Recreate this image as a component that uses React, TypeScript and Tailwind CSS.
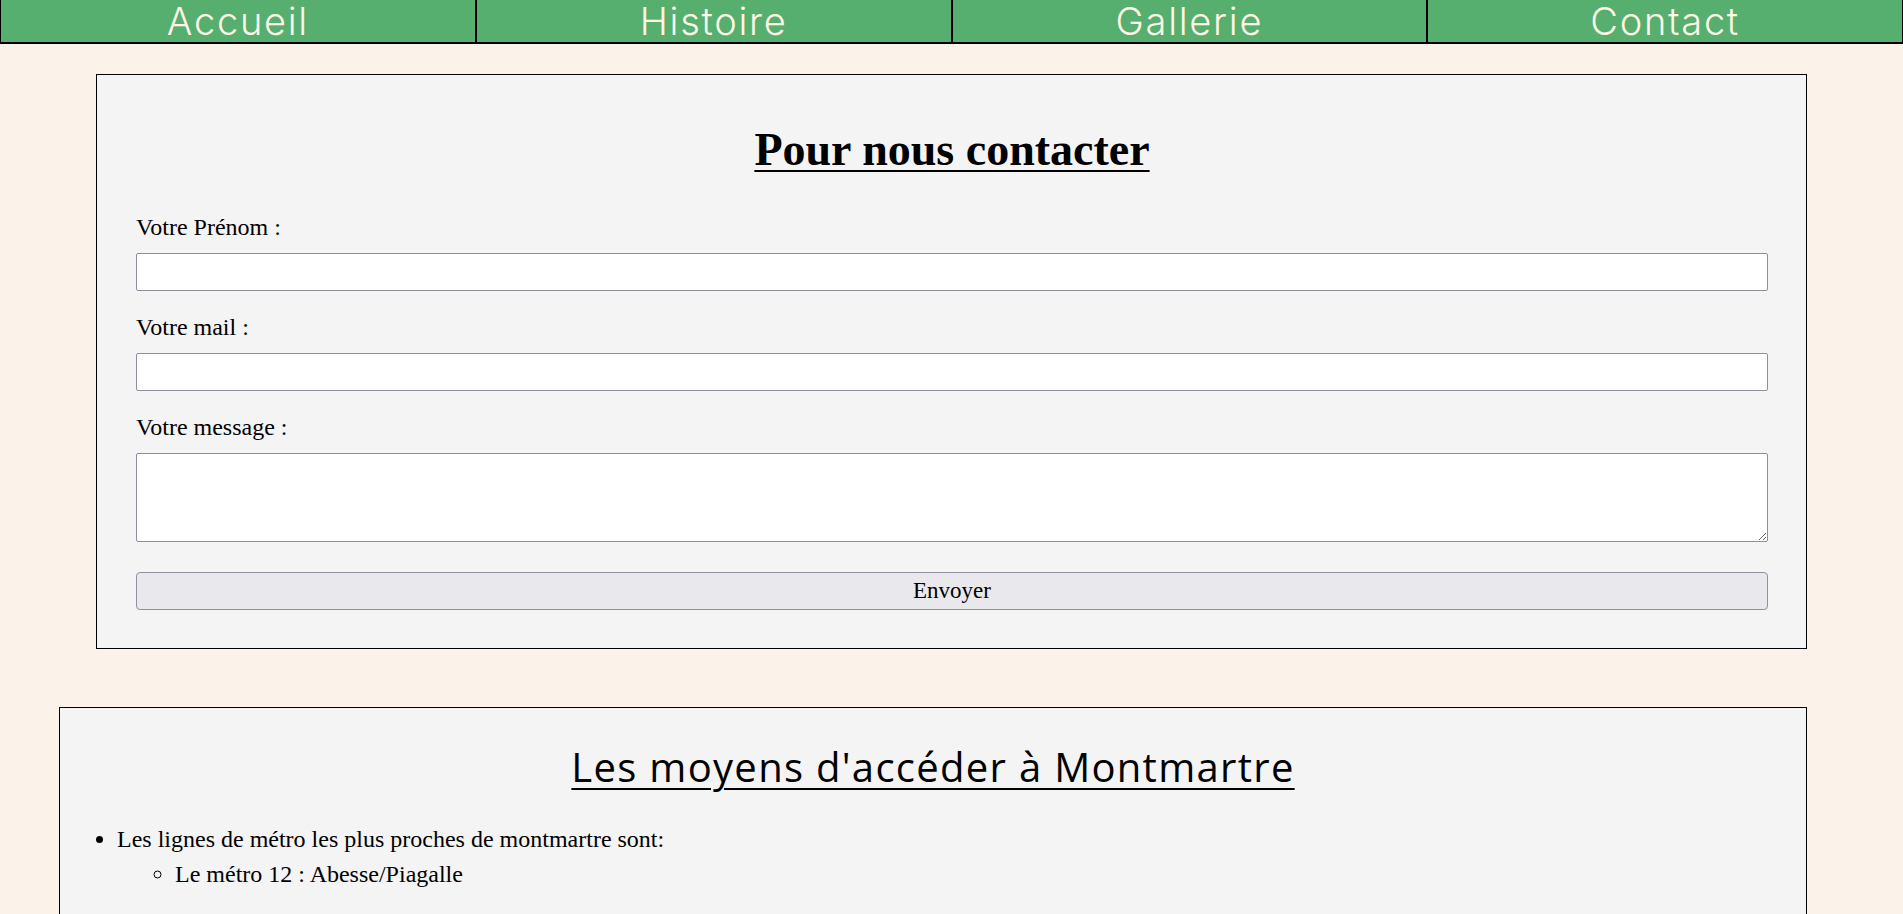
const navItems = ["Accueil", "Histoire", "Gallerie", "Contact"];

const serif = "font-['Liberation_Serif',serif]";

function Field({ label, children }: { label: string; children: React.ReactNode }) {
  return (
    <div>
      <label className={`block text-[24px] leading-[26px] text-black ${serif}`}>{label}</label>
      <div className="mt-[13px]">{children}</div>
    </div>
  );
}

export default function App() {
  return (
    <div className="min-h-screen bg-[#fbf2e9] pb-20">
      <nav className="flex h-[44px] border-r border-b-2 border-l border-black bg-[#56af6f]">
        {navItems.map((item, i) => (
          <a
            key={item}
            href="#"
            className={`flex flex-1 items-center justify-center font-['Inter',sans-serif] text-[38px] font-light leading-none tracking-[0.045em] text-[#fdf5e6] ${
              i < navItems.length - 1 ? "border-r-2 border-black" : ""
            }`}
          >
            {item}
          </a>
        ))}
      </nav>

      <section className="mt-[30px] ml-[96px] w-[1711px] border border-black bg-[#f4f4f4] pt-[49px] pr-[38px] pb-[38px] pl-[39px]">
        <h2 className={`text-center text-[46px] leading-[52px] font-bold text-black underline underline-offset-[5px] decoration-2 ${serif}`}>
          Pour nous contacter
        </h2>
        <form className="mt-[38px] flex flex-col gap-[23px]">
          <Field label="Votre Prénom :">
            <input type="text" className="block h-[38px] w-full rounded-[2px] border border-[#8f8f9d] bg-white" />
          </Field>
          <Field label="Votre mail :">
            <input type="email" className="block h-[38px] w-full rounded-[2px] border border-[#8f8f9d] bg-white" />
          </Field>
          <Field label="Votre message :">
            <textarea className="block h-[89px] w-full rounded-[2px] border border-[#8f8f9d] bg-white" />
          </Field>
          <button
            type="button"
            className={`mt-[7px] h-[38px] w-full rounded-[4px] border border-[#8f8f9d] bg-[#e9e9ed] text-[23px] leading-[26px] text-black ${serif}`}
          >
            Envoyer
          </button>
        </form>
      </section>

      <section className="mt-[58px] ml-[59px] w-[1748px] border border-black bg-[#f4f4f4] pt-[32px] pb-24">
        <h2 className="text-center font-['Open_Sans',sans-serif] text-[40px] leading-[54px] font-normal tracking-[1.3px] text-black underline underline-offset-[6px] decoration-2">
          Les moyens d'accéder à Montmartre
        </h2>
        <ul className={`mt-[28px] list-disc pl-[57px] text-[24px] leading-[35px] text-black ${serif}`}>
          <li>
            Les lignes de métro les plus proches de montmartre sont:
            <ul className="list-[circle] pl-[58px]">
              <li>Le métro 12 : Abesse/Piagalle</li>
            </ul>
          </li>
        </ul>
      </section>
    </div>
  );
}
